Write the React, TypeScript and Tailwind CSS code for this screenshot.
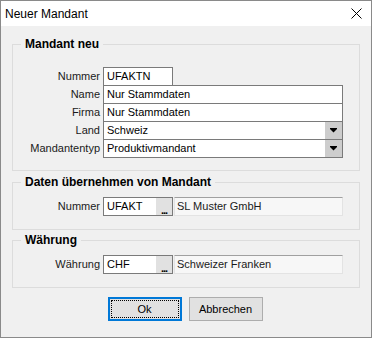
const FONT = { fontFamily: '"Liberation Sans", Arial, sans-serif' };

const Label = ({ children }: { children: string }) => (
  <span className="w-[87px] shrink-0 text-right text-[11px] leading-[17px] text-[#1a1a1a]">{children}</span>
);

const TextBox = ({ value, className = '' }: { value: string; className?: string }) => (
  <div className={`h-[19px] border border-[#7a7a7a] bg-white pl-[3px] text-[11px] leading-[17px] text-black ${className}`}>
    {value}
  </div>
);

const ComboBox = ({ value }: { value: string }) => (
  <div className="flex h-[19px] flex-1 border border-[#7a7a7a] bg-white text-[11px] leading-[17px] text-black">
    <span className="flex-1 pl-[3px]">{value}</span>
    <span className="flex w-[17px] items-center justify-center bg-[#cdcdcd]">
      <svg width="7" height="5" viewBox="0 0 7 5">
        <rect x="0" y="0" width="7" height="1" fill="#000" />
        <polygon points="0,1 7,1 3.5,4.5" fill="#000" />
      </svg>
    </span>
  </div>
);

const LookupField = ({ code, text }: { code: string; text: string }) => (
  <div className="flex flex-1">
    <div className="flex h-[19px] w-[70px] border border-[#7a7a7a] bg-white text-[11px] leading-[17px] text-black">
      <span className="flex-1 pl-[3px]">{code}</span>
      <span className="flex w-[16px] items-end justify-center bg-[#e1e1e1] pb-[1px] text-[11px] font-bold leading-[8px] tracking-[-1px]">
        ...
      </span>
    </div>
    <div className="ml-[1px] h-[19px] flex-1 border border-[#e3e3e3] border-t-[#a0a0a0] bg-[#f7f7f7] pl-[2px] text-[11px] leading-[17px] text-[#1a1a1a]">
      {text}
    </div>
  </div>
);

const Group = ({ title, className = '', children }: { title: string; className?: string; children: React.ReactNode }) => (
  <fieldset className={`m-0 border border-[#dcdcdc] p-0 ${className}`}>
    <legend className="ml-[8px] px-[4px] text-[12px] font-bold leading-[14px] text-black">{title}</legend>
    {children}
  </fieldset>
);

export default function App() {
  return (
    <div style={FONT} className="flex h-[338px] w-[372px] flex-col border border-[#8a8a8a] bg-[#f0f0f0]">
      {/* Title bar */}
      <div className="flex h-[25px] shrink-0 items-center justify-between bg-white pl-[4px] pr-[9px]">
        <span className="text-[12px] leading-[14px] text-black">Neuer Mandant</span>
        <svg width="11" height="11" viewBox="0 0 11 11">
          <path d="M0.5 0.5 L10.5 10.5 M10.5 0.5 L0.5 10.5" stroke="#000" strokeWidth="1" />
        </svg>
      </div>

      <div className="flex flex-col px-[11px] pt-[11px]">
        <Group title="Mandant neu">
          <div className="flex flex-col pb-[12px] pr-[16px] pt-[16px]">
            <div className="flex items-center">
              <Label>Nummer</Label>
              <TextBox value="UFAKTN" className="ml-[3px] w-[70px]" />
            </div>
            <div className="-mt-px flex items-center">
              <Label>Name</Label>
              <TextBox value="Nur Stammdaten" className="ml-[3px] flex-1" />
            </div>
            <div className="-mt-px flex items-center">
              <Label>Firma</Label>
              <TextBox value="Nur Stammdaten" className="ml-[3px] flex-1" />
            </div>
            <div className="-mt-px flex items-center">
              <Label>Land</Label>
              <div className="ml-[3px] flex flex-1">
                <ComboBox value="Schweiz" />
              </div>
            </div>
            <div className="-mt-px flex items-center">
              <Label>Mandantentyp</Label>
              <div className="ml-[3px] flex flex-1">
                <ComboBox value="Produktivmandant" />
              </div>
            </div>
          </div>
        </Group>

        <Group title="Daten übernehmen von Mandant" className="mt-[4px]">
          <div className="flex items-center pb-[13px] pr-[16px] pt-[8px]">
            <Label>Nummer</Label>
            <div className="ml-[3px] flex flex-1">
              <LookupField code="UFAKT" text="SL Muster GmbH" />
            </div>
          </div>
        </Group>

        <Group title="Währung" className="mt-[3px]">
          <div className="flex items-center pb-[13px] pr-[16px] pt-[8px]">
            <Label>Währung</Label>
            <div className="ml-[3px] flex flex-1">
              <LookupField code="CHF" text="Schweizer Franken" />
            </div>
          </div>
        </Group>

        <div className="mt-[9px] flex justify-center gap-[7px] pr-[2px]">
          <button className="h-[24px] w-[74px] border-2 border-[#0078d7] bg-[#e1e1e1] p-px text-[11px] text-black">
            <span className="flex h-full w-full items-center justify-center border border-dotted border-black">Ok</span>
          </button>
          <button className="h-[24px] w-[74px] border border-[#adadad] bg-[#e1e1e1] text-[11px] text-black">
            Abbrechen
          </button>
        </div>
      </div>
    </div>
  );
}
